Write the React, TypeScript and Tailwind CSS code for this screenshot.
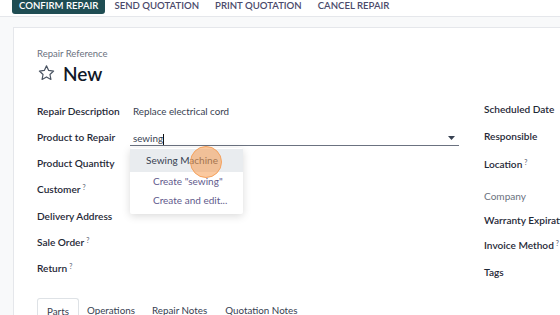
import React from "react";

const Q = () => <sup className="text-[7px] text-[#6b7280] ml-[2px] relative -top-[3px]">?</sup>;

export default function App() {
  const font = { fontFamily: "Lato, 'Open Sans', sans-serif" };
  const leftRows: [React.ReactNode, React.ReactNode][] = [
    [<>Repair Description</>, <span className="text-[#374151] font-normal">Replace electrical cord</span>],
    [<>Product to Repair</>, null],
    [<>Product Quantity</>, null],
    [<>Customer<Q /></>, null],
    [<>Delivery Address</>, null],
    [<>Sale Order<Q /></>, null],
    [<>Return<Q /></>, null],
  ];
  return (
    <div className="w-[560px] h-[315px] overflow-hidden bg-[#f8f9fa] relative" style={font}>
      {/* top bar */}
      <div className="h-[17px] bg-white border-b border-[#e5e7eb] flex items-start pl-[12px] text-[9.6px] font-semibold">
        <div className="h-[15px] -mt-[1px] px-[7px] bg-[#1f4d53] text-white rounded-b-[3px] flex items-center">CONFIRM REPAIR</div>
        <div className="h-[12px] ml-[1px] px-[8px] text-[#4b4a6b] flex items-center">SEND QUOTATION</div>
        <div className="h-[12px] px-[8px] text-[#4b4a6b] flex items-center">PRINT QUOTATION</div>
        <div className="h-[12px] px-[8px] text-[#4b4a6b] flex items-center">CANCEL REPAIR</div>
      </div>
      {/* card */}
      <div className="ml-[13px] mt-[10px] bg-white border-l border-t border-[#e5e7eb] h-[300px] pl-[23px] pt-[19px]">
        <div className="text-[9.5px] text-[#6b7280] leading-[14px]">Repair Reference</div>
        <div className="flex items-center h-[22px] gap-[7px] mt-[1px]">
          <svg width="19" height="18" viewBox="0 0 24 24" fill="none" stroke="#4b5563" strokeWidth="1.6" strokeLinejoin="round">
            <polygon points="12,2.5 14.9,8.6 21.5,9.4 16.6,14 17.9,20.6 12,17.3 6.1,20.6 7.4,14 2.5,9.4 9.1,8.6" />
          </svg>
          <span className="text-[19px] font-semibold text-[#111827] leading-none">New</span>
        </div>
        <div className="flex mt-[14px]">
          {/* left column */}
          <div className="w-[447px] shrink-0 relative">
            {leftRows.map(([l, v], i) => (
              <div key={i} className="h-[26.3px] flex items-center text-[10.1px]">
                <div className="w-[96px] shrink-0 font-semibold text-[#1f2937]">{l}</div>
                <div className="flex-1 text-[9.8px]">
                  {i === 1 ? (
                    <div className="h-[17px] border-b border-[#6b7280] flex items-center justify-between pr-[4px] -ml-[3px] mr-[25px] pt-[3px]">
                      <span className="text-[#374151] pl-[3px]">sewing<span className="inline-block w-px h-[11px] bg-[#111] align-middle ml-[0.5px]" /></span>
                      <svg width="7" height="5" viewBox="0 0 7 5"><polygon points="0,0 7,0 3.5,4" fill="#374151" /></svg>
                    </div>
                  ) : (
                    v
                  )}
                </div>
              </div>
            ))}
            {/* dropdown */}
            <div className="absolute left-[93px] top-[50px] w-[113px] bg-white shadow-[0_2px_8px_rgba(0,0,0,0.15)] rounded-[2px] py-[1px] text-[10px]">
              <div className="h-[23px] bg-[#e9ecef] flex items-center pl-[16px] text-[#374151]">Sewing Machine</div>
              <div className="h-[19px] flex items-center pl-[23px] text-[#5f5a8c]">Create "sewing"</div>
              <div className="h-[19px] flex items-center pl-[23px] text-[#5f5a8c] mb-[3px]">Create and edit...</div>
            </div>
            <div className="absolute left-[153px] top-[48px] w-[32px] h-[32px] rounded-full bg-[rgba(247,157,80,0.55)] border border-[#f5a25e]" />
          </div>
          {/* right column */}
          <div className="text-[10.1px] font-semibold text-[#1f2937] whitespace-nowrap -mt-[1px]">
            <div className="h-[26px] flex items-center">Scheduled Date</div>
            <div className="h-[28px] flex items-center">Responsible</div>
            <div className="h-[28px] flex items-center">Location<Q /></div>
            <div className="h-[24px] mt-[6px] flex items-center font-normal text-[#6b7280]">Company</div>
            <div className="h-[24px] flex items-center">Warranty Expiration</div>
            <div className="h-[26px] flex items-center">Invoice Method<Q /></div>
            <div className="h-[28px] flex items-center">Tags</div>
          </div>
        </div>
        {/* tabs */}
        <div className="flex mt-[11px] text-[9.8px] text-[#374151]">
          <div className="h-[20px] px-[9px] border border-b-0 border-[#dee2e6] rounded-t-[3px] pt-[5px]">Parts</div>
          <div className="h-[20px] px-[8px] pt-[5px]">Operations</div>
          <div className="h-[20px] px-[9px] pt-[5px]">Repair Notes</div>
          <div className="h-[20px] px-[9px] pt-[5px]">Quotation Notes</div>
        </div>
      </div>
    </div>
  );
}
